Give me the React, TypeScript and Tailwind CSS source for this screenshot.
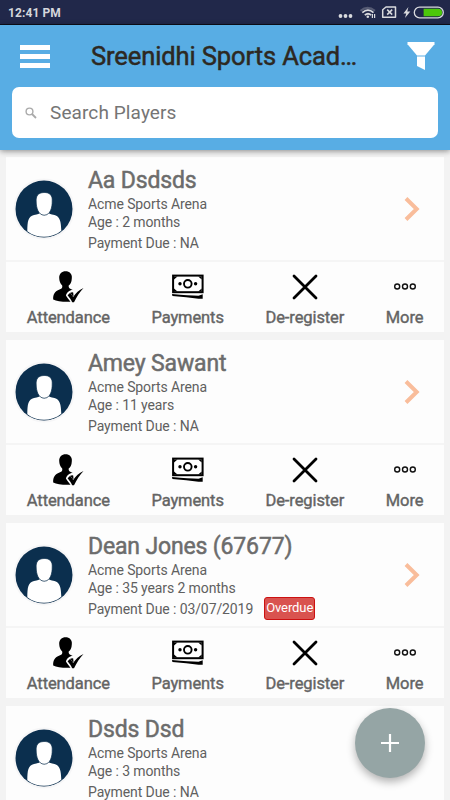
type Player = {
  name: string;
  arena: string;
  age: string;
  paymentDue: string;
  overdue?: boolean;
};

const players: Player[] = [
  { name: "Aa Dsdsds", arena: "Acme Sports Arena", age: "2 months", paymentDue: "NA" },
  { name: "Amey Sawant", arena: "Acme Sports Arena", age: "11 years", paymentDue: "NA" },
  {
    name: "Dean Jones (67677)",
    arena: "Acme Sports Arena",
    age: "35 years 2 months",
    paymentDue: "03/07/2019",
    overdue: true,
  },
  { name: "Dsds Dsd", arena: "Acme Sports Arena", age: "3 months", paymentDue: "NA" },
];

function StatusBar() {
  return (
    <div className="flex h-[25px] shrink-0 items-center justify-between border-b border-[#0d0d18] bg-[#21284a] pl-2 pr-[5px]">
      <span className="pt-0.5 text-[12px] font-bold tracking-[0.1px] text-[#d5d6dc]">12:41 PM</span>
      <svg width="107" height="24" viewBox="338 0 107 24" fill="none" aria-hidden="true">
        {/* Notifications */}
        <g fill="#d9dade">
          <circle cx="340.5" cy="16" r="1.9" />
          <circle cx="345.5" cy="16" r="1.9" />
          <circle cx="350.5" cy="16" r="1.9" />
        </g>
        {/* Wifi */}
        <path d="M360.5 10.8Q367.5 5 375 10.8" stroke="#555a73" strokeWidth="2" />
        <path d="M362.3 12.6Q368 7.6 373.5 12.6" stroke="#d9dade" strokeWidth="1.7" />
        <path d="M364.8 15.2Q368 12.3 371.2 15.2" stroke="#d9dade" strokeWidth="1.7" />
        <circle cx="367.8" cy="16.8" r="1.3" fill="#d9dade" />
        <path d="M372.4 14v4M374.6 14v4" stroke="#d9dade" strokeWidth="1.2" />
        {/* No SIM */}
        <path
          d="M386 7h9.5v10.3h-12.8v-7.5z"
          stroke="#d9dade"
          strokeWidth="1.5"
          strokeLinejoin="round"
        />
        <path d="M387.2 9.6l5 5M392.2 9.6l-5 5" stroke="#d9dade" strokeWidth="1.5" />
        {/* Battery */}
        <path d="M408.4 7l-5 6.4h2.8l-1.2 4.7 5.3-6.7h-3z" fill="#d9dade" />
        <rect x="414.3" y="7.2" width="29" height="10.6" rx="5.3" stroke="#d9dade" strokeWidth="1.3" />
        <path d="M423.6 8.7h14.7a3.8 3.8 0 010 7.6h-14.7z" fill="#4cc80a" />
      </svg>
    </div>
  );
}

function AvatarIcon() {
  return (
    <svg className="h-[62px] w-[62px] shrink-0" viewBox="0 0 62 62" aria-hidden="true">
      <circle cx="31" cy="31" r="30.5" fill="#f6f6f7" />
      <circle cx="31" cy="31" r="28.5" fill="#0b2f4e" />
      <path
        d="M14.3 53.2C14.5 43.5 15 38.5 21 37.1C25 36.2 26.5 35.8 27 34.7Q31 40 35.5 34.7C36.2 35.8 37.5 36.2 41.5 37.1C47 38.5 48 43.5 48.3 52.8C38.5 60.8 24 60.8 14.3 53.2Z"
        fill="#fff"
      />
      <path
        d="M31 14.5C36.5 14.3 39.7 17.3 39.2 23C39.3 29 37.6 37.2 31.2 37.2C25 37.2 23.2 29 23.2 24C22.7 18 25 14.7 31 14.5Z"
        fill="#fff"
        stroke="#0b2f4e"
        strokeWidth="0.7"
      />
    </svg>
  );
}

function AttendanceIcon() {
  return (
    <svg width="32" height="34" viewBox="-0.5 0 32 34" aria-hidden="true">
      <path
        d="M13 1.3C17 1.3 20 4 19.3 8.5C19.2 12 17.8 14.4 16.2 15.5C15.7 18 17.3 18.7 20.2 20C16.8 20 14.1 22.7 13.4 25.6Q15 28.4 18 31.8Q6 32.2.7 29.5C.4 24.5 2.4 21 7 19.5C9.8 18.6 10 17.5 9.7 15.5C7.8 13.5 6.8 11.5 6.7 8C6.5 4 9.5 1.3 13 1.3Z"
        fill="#000"
      />
      <path
        d="M15.1 25.2L17.4 23.1C18.8 24.1 19.7 25.2 20.6 27C23.4 23 26.4 19.9 31 18C27 22.3 24.4 26.5 21.5 32.2H19.7C18.4 29.5 17 27.4 15.1 25.2Z"
        fill="#000"
      />
      <path d="M17.4 23.1Q19.2 21.8 20.7 22.4L21 25.8L20.4 26.5Q19.1 24 17.4 23.1Z" fill="#000" />
    </svg>
  );
}

function PaymentsIcon() {
  return (
    <svg width="32" height="34" viewBox="0 0 32 34" aria-hidden="true">
      <rect x="1.1" y="5.6" width="29.5" height="16.6" fill="#fff" stroke="#000" strokeWidth="2" />
      <path d="M2 6.5h3.5L2 9.6zM29.7 6.5h-3.5l3.5 3.1zM2 21.5h3.5L2 18.4zM29.7 21.5h-3.5l3.5-3.1z" fill="#000" />
      <circle cx="15.8" cy="13.8" r="3.8" fill="none" stroke="#000" strokeWidth="1.9" />
      <circle cx="8" cy="13.8" r="1.7" fill="#000" />
      <circle cx="23.6" cy="13.8" r="1.7" fill="#000" />
      <path d="M0 24.1Q17 25.7 26.5 25.8L30.7 24.3V28.7H26.5Q15 27.5 .4 26.1Z" fill="#000" />
    </svg>
  );
}

function CrossIcon() {
  return (
    <svg width="32" height="34" viewBox="0 0 32 34" aria-hidden="true">
      <path d="M5 6l22 22M27 6L5 28" stroke="#000" strokeWidth="2.8" strokeLinecap="round" />
    </svg>
  );
}

function MoreIcon() {
  return (
    <svg width="32" height="34" viewBox="0 0 32 34" fill="none" stroke="#111" strokeWidth="1.4" aria-hidden="true">
      <circle cx="8.2" cy="16.5" r="2.5" />
      <circle cx="16" cy="16.5" r="2.5" />
      <circle cx="23.8" cy="16.5" r="2.5" />
    </svg>
  );
}

const actions = [
  { label: "Attendance", icon: <AttendanceIcon />, width: "w-[84px]" },
  { label: "Payments", icon: <PaymentsIcon />, width: "w-[73px]" },
  { label: "De-register", icon: <CrossIcon />, width: "w-[80px]" },
  { label: "More", icon: <MoreIcon />, width: "w-[38px]" },
];

function PlayerCard({ player, showActions }: { player: Player; showActions: boolean }) {
  return (
    <article className="h-[175px] shrink-0 bg-[#fdfdfd]">
      <div className="flex h-[105px] items-center border-b-2 border-[#f5f5f5] pl-[7px] pr-6">
        <AvatarIcon />
        <div className="ml-[13px] flex-1 pt-0.5 text-[14px] tracking-[-0.1px] text-[#606060]">
          <h2 className="h-[29px] whitespace-nowrap text-[23px] leading-[29px] tracking-[-0.15px] text-[#6c6c6c] [-webkit-text-stroke:0.5px_#6c6c6c]">
            {player.name}
          </h2>
          <p className="h-[18px] leading-[18px]">{player.arena}</p>
          <p className="h-[18px] leading-[19px]">Age : {player.age}</p>
          <div className="flex h-[23px] items-center">
            <span className="pt-0.5">Payment Due : {player.paymentDue}</span>
            {player.overdue && (
              <span className="ml-[11px] flex h-[23px] w-[51px] items-center justify-center rounded-[3px] border border-[#cc1111] bg-[#d9534f] text-[13px] text-white">
                Overdue
              </span>
            )}
          </div>
        </div>
        <svg width="16" height="24" viewBox="0 0 16 24" fill="none" aria-hidden="true">
          <path d="M2 1.5L12.7 12L2 22.5" stroke="#f9bd9b" strokeWidth="4" />
        </svg>
      </div>

      {showActions && (
        <div className="flex h-[70px] justify-around pt-2">
          {actions.map((action) => (
            <button key={action.label} className={`flex flex-col items-center ${action.width}`}>
              {action.icon}
              <span className="whitespace-nowrap text-[16.5px] leading-[27px] tracking-[-0.1px] text-[#646464] [-webkit-text-stroke:0.4px_#646464]">
                {action.label}
              </span>
            </button>
          ))}
        </div>
      )}
    </article>
  );
}

export default function App() {
  return (
    <div className="relative flex h-[800px] w-[450px] flex-col overflow-hidden bg-[#f3f3f3] font-['Roboto',sans-serif]">
      <StatusBar />

      {/* Header */}
      <header className="z-10 h-[125px] shrink-0 bg-[#58ade4] px-3 shadow-[0_1px_6px_rgba(0,0,0,0.45)]">
        <div className="flex h-[62px] items-center pl-2 pr-[3px]">
          <div className="flex w-[30px] flex-col gap-1">
            <div className="h-[5px] bg-white" />
            <div className="h-[5px] bg-white" />
            <div className="h-[5px] bg-white" />
          </div>
          <h1 className="ml-[41px] flex-1 whitespace-nowrap text-[25.5px] tracking-[-0.1px] text-[#2d2822] [-webkit-text-stroke:0.5px_#2d2822]">
            Sreenidhi Sports Acad…
          </h1>
          <svg width="28" height="30" viewBox="0 0 28 30" fill="#fff" aria-hidden="true">
            <path d="M.5 1h27v2.2L18 14.5h-8L.5 3.2z" />
            <path d="M10 15.5h8V29l-8-4z" />
          </svg>
        </div>
        <div className="flex h-[51px] items-center rounded-[7px] bg-white pl-[13px]">
          <svg width="12" height="12" viewBox="0 0 12 12" fill="none" stroke="#aaa" aria-hidden="true">
            <circle cx="4.5" cy="4.5" r="3.4" strokeWidth="1.4" />
            <path d="M7 7l4 4" strokeWidth="1.8" />
          </svg>
          <span className="ml-[13px] pt-0.5 text-[19px] tracking-[0.1px] text-[#757575]">Search Players</span>
        </div>
      </header>

      {/* Players */}
      <main className="flex flex-1 flex-col gap-2 overflow-hidden px-1.5 pt-[7px]">
        {players.map((player, index) => (
          <PlayerCard key={player.name} player={player} showActions={index < players.length - 1} />
        ))}
      </main>

      <button
        aria-label="Add player"
        className="absolute right-[25px] top-[708px] z-20 flex h-[70px] w-[70px] items-center justify-center rounded-full bg-[#95a5a5] shadow-[0_4px_9px_rgba(0,0,0,0.3)]"
      >
        <svg width="18" height="18" viewBox="0 0 18 18" stroke="#fff" strokeWidth="2.2" aria-hidden="true">
          <path d="M9 0v18M0 9h18" />
        </svg>
      </button>
    </div>
  );
}
